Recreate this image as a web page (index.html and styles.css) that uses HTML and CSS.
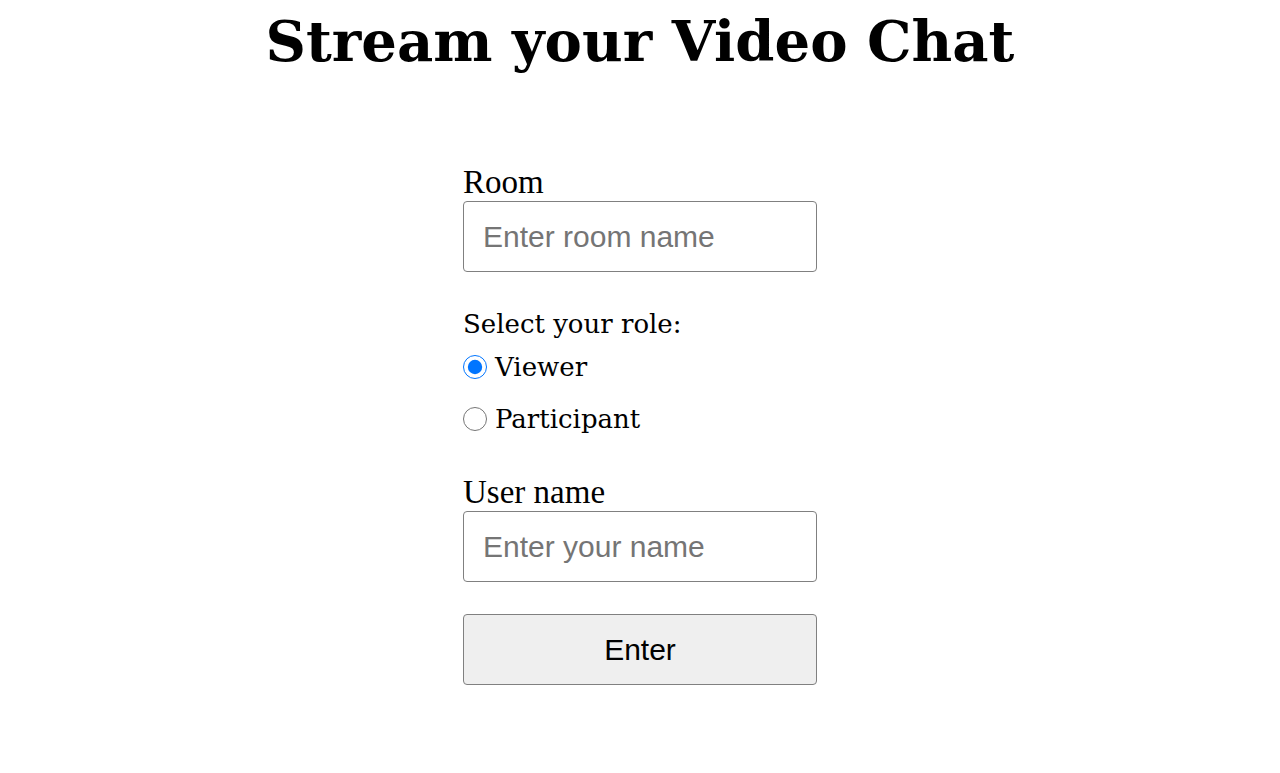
FILE: index.html
```html
<!DOCTYPE html>
<html lang="en">
<head>
<meta charset="utf-8">
<title>Stream your Video Chat</title>
<link rel="stylesheet" href="styles.css">
</head>
<body>
<h1 class="title">Stream your Video Chat</h1>
<form class="form">
  <label class="label" for="room">Room</label>
  <input class="field" id="room" type="text" placeholder="Enter room name">
  <div class="role-title">Select your role:</div>
  <label class="role role-first"><input class="radio" type="radio" name="role" checked><span>Viewer</span></label>
  <label class="role role-second"><input class="radio" type="radio" name="role"><span>Participant</span></label>
  <label class="label label-user" for="user">User name</label>
  <input class="field" id="user" type="text" placeholder="Enter your name">
  <button class="btn" type="button">Enter</button>
</form>
</body>
</html>
```
FILE: styles.css
```css
html, body {
  margin: 0;
  padding: 0;
  background: #ffffff;
}
body {
  width: 1280px;
  height: 773px;
  overflow: hidden;
}
.title {
  margin: 0;
  padding-top: 8px;
  text-align: center;
  font-family: "DejaVu Serif", "Liberation Serif", serif;
  font-weight: bold;
  font-size: 56px;
  line-height: 67px;
  color: #000;
}
.form {
  width: 354px;
  margin: 89px auto 0;
  display: flex;
  flex-direction: column;
}
.label {
  display: block;
  font-family: "Liberation Serif", serif;
  font-size: 33px;
  line-height: 37px;
  color: #000;
}
.label-user {
  margin-top: 37px;
}
.field {
  box-sizing: border-box;
  width: 354px;
  height: 71px;
  margin: 0;
  padding: 0 19px;
  border: 1px solid #808080;
  border-radius: 4px;
  font-family: "Liberation Sans", sans-serif;
  font-size: 30px;
  color: #000;
  background: #fff;
}
.field::placeholder {
  color: #757575;
}
.role-title {
  margin-top: 34px;
  font-family: "DejaVu Serif", serif;
  font-size: 26px;
  line-height: 36px;
  color: #000;
}
.role {
  display: flex;
  align-items: center;
  gap: 8px;
  height: 36px;
  font-family: "DejaVu Serif", serif;
  font-size: 26px;
  line-height: 36px;
  color: #000;
}
.role-first {
  margin-top: 7px;
}
.role-second {
  margin-top: 16px;
}
.radio {
  width: 24px;
  height: 24px;
  margin: 0;
}
.btn {
  box-sizing: border-box;
  width: 354px;
  height: 71px;
  margin-top: 32px;
  border: 1px solid #808080;
  border-radius: 4px;
  background: #efefef;
  font-family: "Liberation Sans", sans-serif;
  font-size: 30px;
  color: #000;
}
```
